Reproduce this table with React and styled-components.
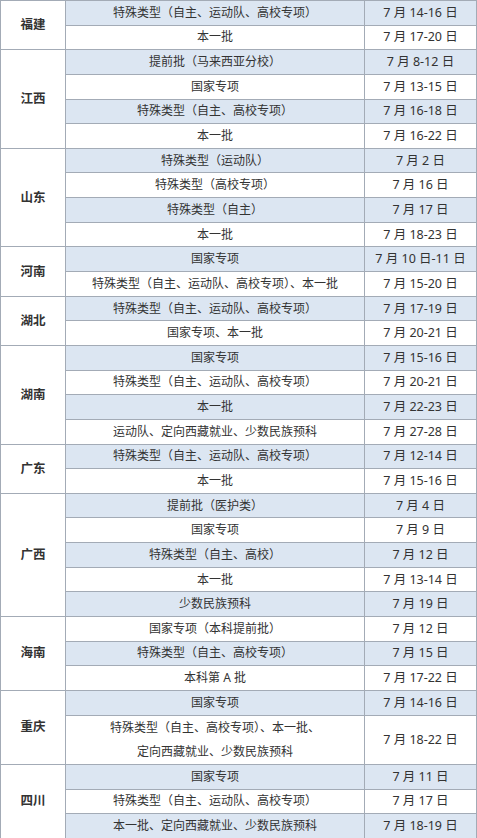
import React from "react";
import styled, { createGlobalStyle } from "styled-components";

const Global = createGlobalStyle`
  html, body { margin: 0; padding: 0; background: #ffffff; }
  body { font-family: "Noto Sans", "Noto Sans CJK SC", sans-serif; }
`;

const Table = styled.table`
  width: 477px;
  table-layout: fixed;
  border-collapse: collapse;
  color: #333333;
  font-size: 12px;
`;

const Col = styled.col`
  width: ${(p) => p.$w}px;
`;

const Row = styled.tr`
  height: ${(p) => (p.$double ? 49.3 : 24.65)}px;
`;

const Province = styled.td`
  border: 1px solid #a3abb6;
  background: #ffffff;
  text-align: center;
  vertical-align: middle;
  font-weight: 700;
  font-size: 12.5px;
  line-height: 16px;
  padding: 0;
`;

const Cell = styled.td`
  border: 1px solid #a3abb6;
  background: ${(p) => (p.$shade ? "#dce6f2" : "#ffffff")};
  text-align: center;
  vertical-align: middle;
  padding: 0;
  line-height: ${(p) => (p.$double ? 24 : 16)}px;
  white-space: nowrap;
`;

const DateCell = styled(Cell)`
  font-size: 12.5px;
  line-height: 16px;
`;

const data = [
  ["福建", [["特殊类型（自主、运动队、高校专项）", "7 月 14-16 日"], ["本一批", "7 月 17-20 日"]]],
  ["江西", [["提前批（马来西亚分校）", "7 月 8-12 日"], ["国家专项", "7 月 13-15 日"], ["特殊类型（自主、高校专项）", "7 月 16-18 日"], ["本一批", "7 月 16-22 日"]]],
  ["山东", [["特殊类型（运动队）", "7 月 2 日"], ["特殊类型（高校专项）", "7 月 16 日"], ["特殊类型（自主）", "7 月 17 日"], ["本一批", "7 月 18-23 日"]]],
  ["河南", [["国家专项", "7 月 10 日-11 日"], ["特殊类型（自主、运动队、高校专项）、本一批", "7 月 15-20 日"]]],
  ["湖北", [["特殊类型（自主、运动队、高校专项）", "7 月 17-19 日"], ["国家专项、本一批", "7 月 20-21 日"]]],
  ["湖南", [["国家专项", "7 月 15-16 日"], ["特殊类型（自主、运动队、高校专项）", "7 月 20-21 日"], ["本一批", "7 月 22-23 日"], ["运动队、定向西藏就业、少数民族预科", "7 月 27-28 日"]]],
  ["广东", [["特殊类型（自主、运动队、高校专项）", "7 月 12-14 日"], ["本一批", "7 月 15-16 日"]]],
  ["广西", [["提前批（医护类）", "7 月 4 日"], ["国家专项", "7 月 9 日"], ["特殊类型（自主、高校）", "7 月 12 日"], ["本一批", "7 月 13-14 日"], ["少数民族预科", "7 月 19 日"]]],
  ["海南", [["国家专项（本科提前批）", "7 月 12 日"], ["特殊类型（自主、高校专项）", "7 月 15 日"], ["本科第 A 批", "7 月 17-22 日"]]],
  ["重庆", [["国家专项", "7 月 14-16 日"], [["特殊类型（自主、高校专项）、本一批、", "定向西藏就业、少数民族预科"], "7 月 18-22 日"]]],
  ["四川", [["国家专项", "7 月 11 日"], ["特殊类型（自主、运动队、高校专项）", "7 月 17 日"], ["本一批、定向西藏就业、少数民族预科", "7 月 18-19 日"]]],
];

export default function App() {
  let idx = 0;
  const rows = [];
  data.forEach(([prov, items]) => {
    items.forEach(([cat, date], i) => {
      idx += 1;
      const shade = idx % 2 === 1;
      const multi = Array.isArray(cat);
      rows.push(
        <Row key={`${prov}-${i}`} $double={multi}>
          {i === 0 && <Province rowSpan={items.length}>{prov}</Province>}
          <Cell $shade={shade} $double={multi}>
            {multi ? (
              <>
                {cat[0]}
                <br />
                {cat[1]}
              </>
            ) : (
              cat
            )}
          </Cell>
          <DateCell $shade={shade}>{date}</DateCell>
        </Row>
      );
    });
  });
  return (
    <>
      <Global />
      <Table>
        <colgroup>
          <Col $w={65} />
          <Col $w={299} />
          <Col $w={112} />
        </colgroup>
        <tbody>{rows}</tbody>
      </Table>
    </>
  );
}
